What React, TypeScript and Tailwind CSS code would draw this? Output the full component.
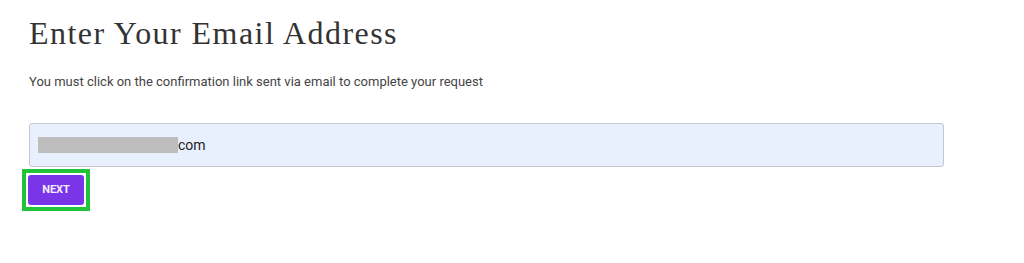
export default function App() {
  return (
    <div className="w-[1024px] h-[263px] bg-white pl-[29px] pt-[13px]">
      <h1 className="text-[32px] leading-[40px] text-[#333333] font-['Liberation_Serif',serif] tracking-[1.45px]">
        Enter Your Email Address
      </h1>
      <p className="mt-[21px] text-[13px] leading-[16px] text-[#444444] font-['Roboto',sans-serif]">
        You must click on the confirmation link sent via email to complete your request
      </p>
      <div className="mt-[33px] w-[915px] h-[44px] rounded-[3px] border border-[#c3c7cd] bg-[#e8f0fe] flex items-center pl-[8px]">
        <span className="w-[140px] h-[16px] bg-[#bdbdbd]" />
        <span className="text-[14px] text-[#222222] font-['Roboto',sans-serif]">com</span>
      </div>
      <div className="ml-[-7px] mt-[2px] w-[68px] h-[42px] border-[4px] border-[#22c33a] p-[2px]">
        <button className="w-[56px] h-[30px] rounded-[3px] bg-[#7a35e8] text-[#f3eeff] text-[11px] font-bold font-['Roboto',sans-serif]">
          NEXT
        </button>
      </div>
    </div>
  );
}
